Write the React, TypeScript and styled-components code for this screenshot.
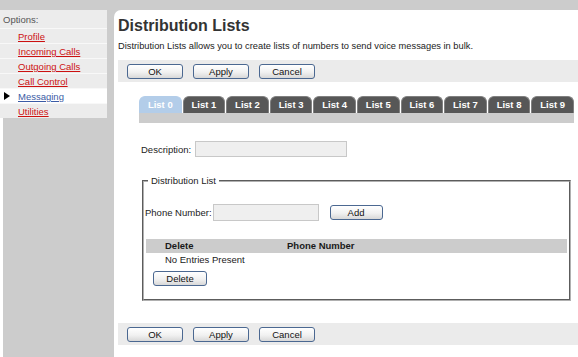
import styled, { createGlobalStyle } from 'styled-components';

const GlobalStyle = createGlobalStyle`
  html, body {
    margin: 0;
    padding: 0;
    background: #ffffff;
  }
  body {
    font-family: "Liberation Sans", Arial, sans-serif;
    font-size: 9.5px;
    color: #1a1a1a;
  }
`;

const menuItems = ['Profile', 'Incoming Calls', 'Outgoing Calls', 'Call Control', 'Messaging', 'Utilities'];
const tabs = ['List 0', 'List 1', 'List 2', 'List 3', 'List 4', 'List 5', 'List 6', 'List 7', 'List 8', 'List 9'];

const ActionBar = ({ bottom }: { bottom?: boolean }) => (
    <Bar $bottom={bottom}>
        <Button $w={56}>OK</Button>
        <Button $w={56}>Apply</Button>
        <Button $w={56}>Cancel</Button>
    </Bar>
);

export default function App() {
    return (
        <>
        <GlobalStyle />
        <Page>
            <TopBand />
            <Body>
                <SideCol>
                    <Menu>
                        <MenuHead>Options:</MenuHead>
                        {menuItems.map((m) => (
                            <MenuRow key={m} $active={m === 'Messaging'}>
                                {m === 'Messaging' && <Pointer />}
                                <MenuLink $active={m === 'Messaging'}>{m}</MenuLink>
                            </MenuRow>
                        ))}
                    </Menu>
                </SideCol>

                <Main>
                    <Title>Distribution Lists</Title>
                    <Intro>Distribution Lists allows you to create lists of numbers to send voice messages in bulk.</Intro>
                    <ActionBar />

                    <Tabs>
                        <TabRow>
                            {tabs.map((t, i) => (
                                <Tab key={t} $active={i === 0}>{t}</Tab>
                            ))}
                        </TabRow>
                        <TabStrip />
                    </Tabs>

                    <DescRow>
                        <Label>Description:</Label>
                        <TextBox $w={152} $h={16} />
                    </DescRow>

                    <Group>
                        <Legend>Distribution List</Legend>
                        <PhoneRow>
                            <Label>Phone Number:</Label>
                            <TextBox $w={106} $h={17} />
                            <AddWrap>
                                <Button $w={53}>Add</Button>
                            </AddWrap>
                        </PhoneRow>
                        <TableHead>
                            <ColDelete>Delete</ColDelete>
                            <span>Phone Number</span>
                        </TableHead>
                        <EmptyRow>No Entries Present</EmptyRow>
                        <DeleteWrap>
                            <Button $w={54}>Delete</Button>
                        </DeleteWrap>
                    </Group>

                    <ActionBar bottom />
                </Main>
            </Body>
        </Page>
        </>
    );
}

const Page = styled.div`
    width: 578px;
    height: 357px;
    display: flex;
    flex-direction: column;
    overflow: hidden;
`;

const TopBand = styled.div`
    height: 10px;
    background: #cccccc;
    flex: none;
`;

const Body = styled.div`
    flex: 1;
    display: flex;
    background: #cccccc;
`;

const SideCol = styled.div`
    width: 114px;
    flex: none;
    background: linear-gradient(to right, #ffffff 3px, #cccccc 3px);
`;

const Menu = styled.div`
    width: 107px;
    background: #ececec;
`;

const MenuHead = styled.div`
    height: 18px;
    line-height: 19px;
    padding-left: 3px;
    color: #555555;
`;

const MenuRow = styled.div<{ $active?: boolean }>`
    position: relative;
    height: 14px;
    line-height: 15px;
    padding-left: 18px;
    border-top: 1px solid #f8f8f8;
    background: ${(p) => (p.$active ? '#ffffff' : 'transparent')};
`;

const Pointer = styled.span`
    position: absolute;
    left: 4px;
    top: 3px;
    width: 0;
    height: 0;
    border-top: 4px solid transparent;
    border-bottom: 4px solid transparent;
    border-left: 6px solid #000000;
`;

const MenuLink = styled.a<{ $active?: boolean }>`
    color: ${(p) => (p.$active ? '#3b5ba5' : '#cc1111')};
    text-decoration: underline;
    cursor: pointer;
`;

const Main = styled.div`
    flex: 1;
    background: #ffffff;
    border-top-left-radius: 7px;
    padding: 7px 0 0 4px;
`;

const Title = styled.h1`
    margin: 0;
    font-size: 16px;
    line-height: 18px;
    font-weight: bold;
    color: #333333;
`;

const Intro = styled.div`
    margin-top: 5px;
    line-height: 12px;
    font-size: 9.3px;
    color: #222222;
`;

const Bar = styled.div<{ $bottom?: boolean }>`
    margin-top: ${(p) => (p.$bottom ? '22px' : '8px')};
    height: 22px;
    background: #ebebeb;
    display: flex;
    align-items: center;
    gap: 10px;
    padding-left: 9px;
`;

const Button = styled.button<{ $w: number }>`
    width: ${(p) => p.$w}px;
    height: 15px;
    padding: 0;
    border: 1px solid #4b6891;
    border-radius: 3px;
    background: linear-gradient(#ffffff, #f1f1f1 55%, #d8d8d8);
    font-family: "Liberation Sans", Arial, sans-serif;
    font-size: 9.5px;
    line-height: 13px;
    color: #111111;
`;

const Tabs = styled.div`
    margin: 14px 0 0 21px;
    width: 435px;
`;

const TabRow = styled.div`
    display: flex;
    gap: 1px;
    height: 17px;
`;

const Tab = styled.div<{ $active?: boolean }>`
    flex: 1;
    border-radius: 6px 6px 0 0;
    background: ${(p) => (p.$active ? '#b3cde9' : '#575757')};
    border: 1px solid ${(p) => (p.$active ? '#b3cde9' : '#808080')};
    border-bottom: none;
    color: #ffffff;
    font-weight: bold;
    font-size: 9.5px;
    line-height: 16px;
    text-align: center;
`;

const TabStrip = styled.div`
    height: 10px;
    background: #cccccc;
`;

const DescRow = styled.div`
    margin: 18px 0 0 23px;
    display: flex;
    align-items: center;
    gap: 4px;
`;

const Label = styled.span`
    color: #222222;
`;

const TextBox = styled.div<{ $w: number; $h: number }>`
    width: ${(p) => p.$w}px;
    height: ${(p) => p.$h}px;
    box-sizing: border-box;
    background: #efefef;
    border: 1px solid #c8c8c8;
`;

const Group = styled.fieldset`
    margin: 18px 0 0 24px;
    width: 429px;
    box-sizing: border-box;
    padding: 0 2px 13px 1px;
    border: 2px groove #b0b0b0;
    min-width: 0;
`;

const Legend = styled.legend`
    margin-left: 3px;
    padding: 0 3px;
    line-height: 12px;
    color: #222222;
`;

const PhoneRow = styled.div`
    margin-top: 17px;
    display: flex;
    align-items: center;
    height: 17px;
    gap: 1px;
`;

const AddWrap = styled.div`
    margin-left: 10px;
    display: flex;
`;

const TableHead = styled.div`
    margin: 18px 0 0 1px;
    height: 14px;
    line-height: 14px;
    background: #cccccc;
    font-weight: bold;
    display: flex;
`;

const ColDelete = styled.span`
    width: 122px;
    padding-left: 19px;
`;

const EmptyRow = styled.div`
    height: 14px;
    line-height: 14px;
    padding-left: 20px;
`;

const DeleteWrap = styled.div`
    margin: 4px 0 0 8px;
    display: flex;
`;
